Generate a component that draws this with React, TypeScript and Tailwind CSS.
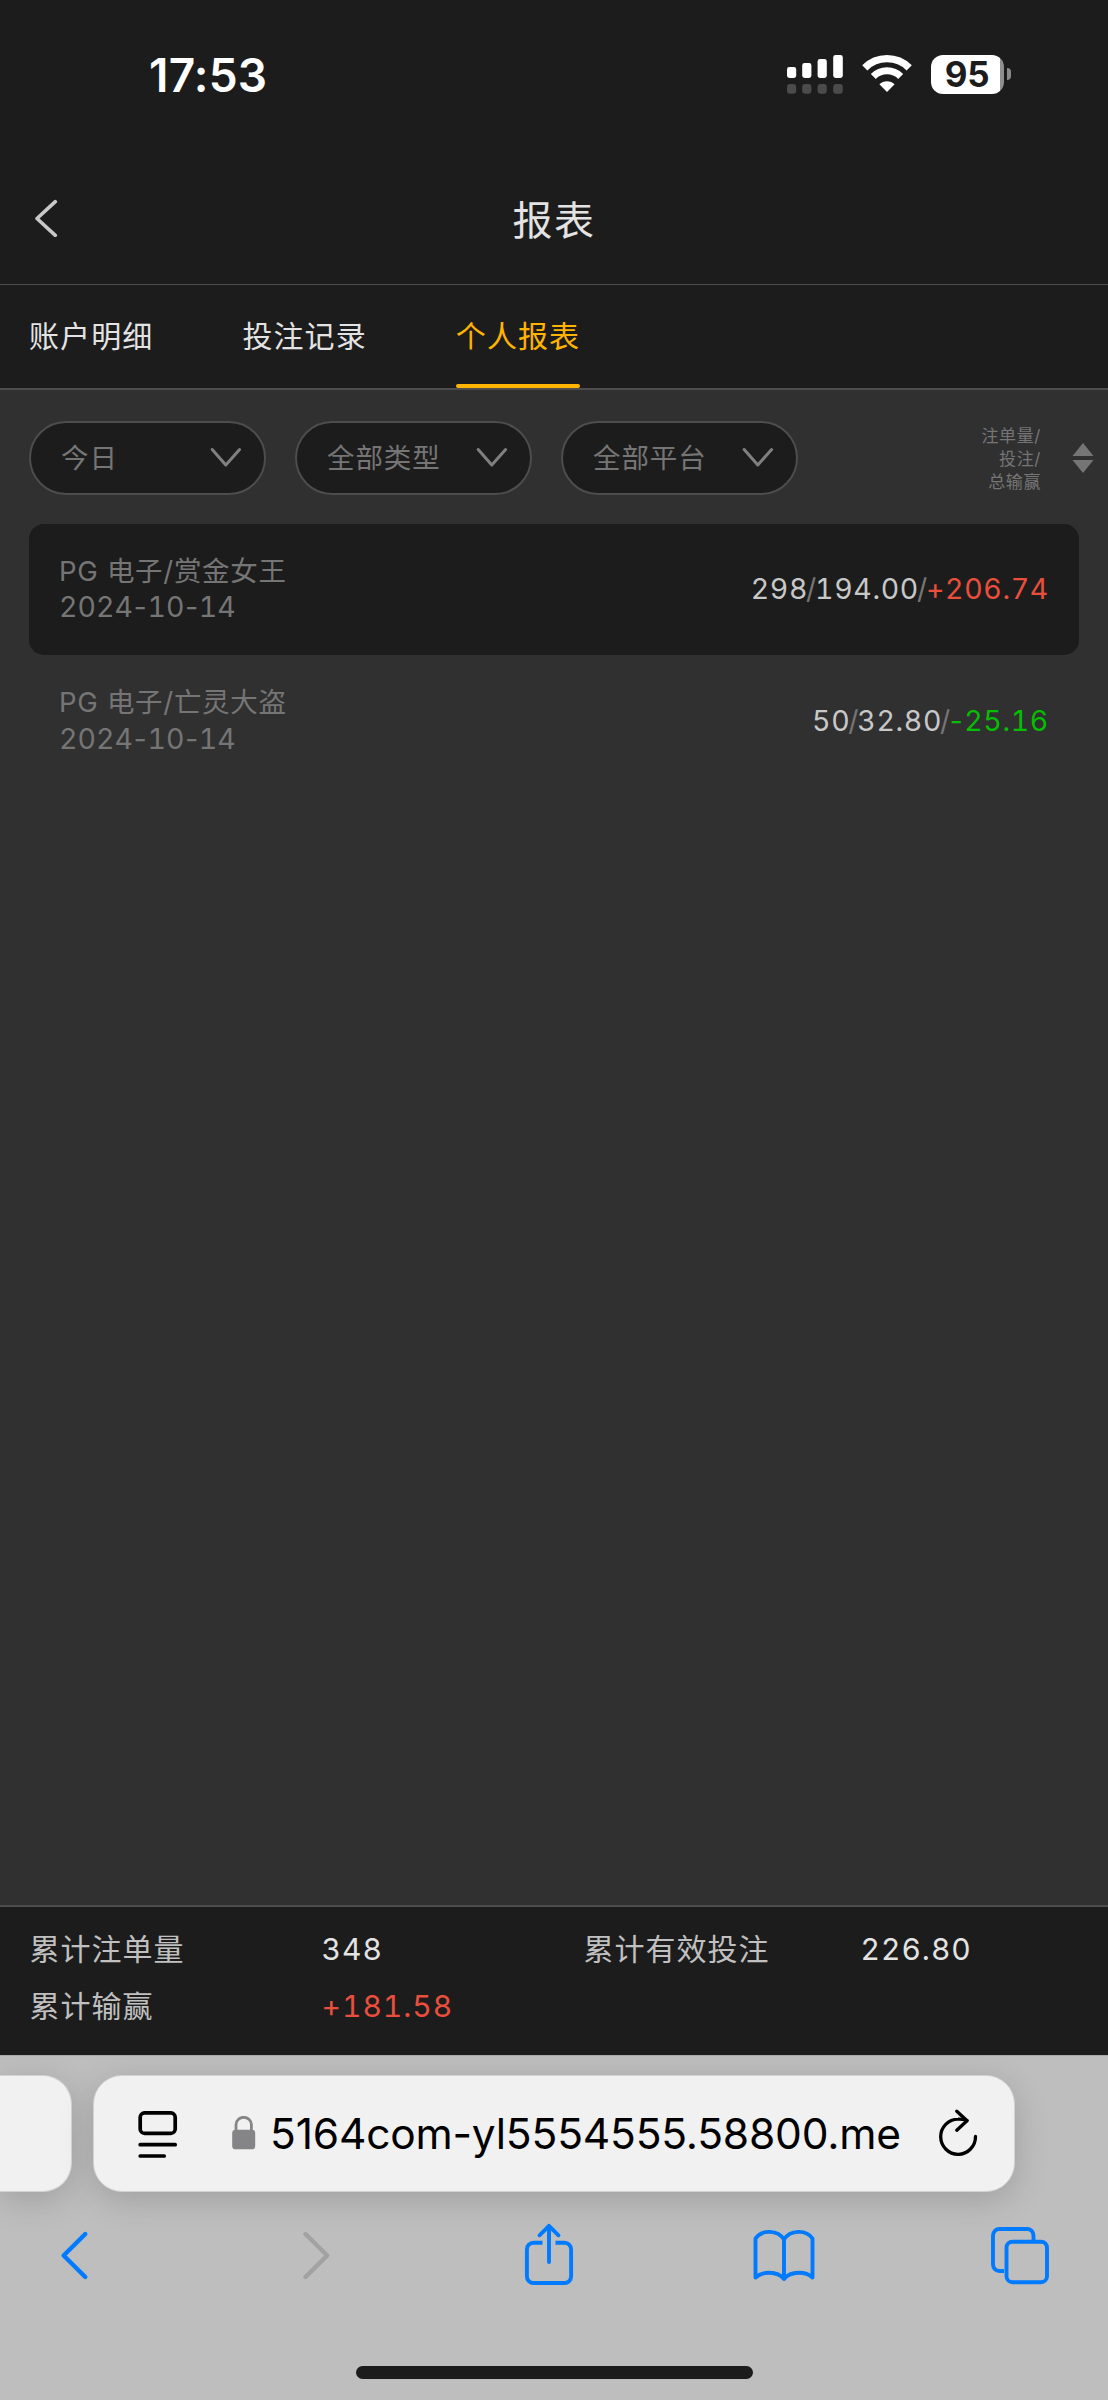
import { Fragment, type ReactNode } from "react";

const tabs = ["账户明细", "投注记录", "个人报表"];
const filters = ["今日", "全部类型", "全部平台"];

const rows = [
  { name: "PG 电子/赏金女王", date: "2024-10-14", count: "298", bet: "194.00", result: "+206.74", win: true },
  { name: "PG 电子/亡灵大盗", date: "2024-10-14", count: "50", bet: "32.80", result: "-25.16", win: false },
];

function StatusBar() {
  return (
    <div className="flex h-[150px] items-start pl-[149px] pt-[54px] text-white">
      <span className="-mt-[1px] mb-[1px] w-[638px] text-[46px] font-semibold leading-[44px] tracking-[0.2px]">17:53</span>
      <svg width="56" height="40" viewBox="0 0 56 40" className="shrink-0" fill="#fff">
        <rect x="0" y="13" width="9.2" height="11" rx="2.4" />
        <rect x="15.2" y="9" width="9.2" height="15" rx="2.4" />
        <rect x="30.6" y="5" width="9.2" height="19" rx="2.4" />
        <rect x="46.2" y="1" width="9.6" height="23" rx="2.4" />
        <g fill="#4b4b4b">
          <rect x="0" y="30" width="9.2" height="9.8" rx="3" />
          <rect x="15.2" y="30" width="9.2" height="9.8" rx="3" />
          <rect x="30.6" y="30" width="9.2" height="9.8" rx="3" />
          <rect x="46.2" y="30" width="9.6" height="9.8" rx="3" />
        </g>
      </svg>
      <svg width="50" height="40" viewBox="0 0 50 40" className="ml-[19px] shrink-0" fill="none" stroke="#fff">
        <path d="M2.8 13.8A31.5 31.5 0 0 1 47.2 13.8" strokeWidth="7.4" />
        <path d="M11.3 22.4A19.4 19.4 0 0 1 38.7 22.4" strokeWidth="7" />
        <path d="M25 38L17.4 30.3A10.8 10.8 0 0 1 32.6 30.3Z" fill="#fff" stroke="none" />
      </svg>
      <div className="ml-[19px] flex items-center">
        <div className="mt-[1px] flex h-[39px] w-[73px] items-center rounded-[12px] bg-gradient-to-r from-white from-[95%] to-[#8f8f8f] to-[95%]">
          <span className="w-[72px] text-center text-[35px] font-bold leading-[39px] tracking-[-0.2px] text-[#1c1c1c]">95</span>
        </div>
        <div className="ml-[3px] h-[12px] w-[4px] rounded-r-full bg-[#8b8b8b]" />
      </div>
    </div>
  );
}

function Header() {
  return (
    <div className="flex h-[135px] items-center border-b border-[#4d4d4d] px-[33px]">
      <svg width="26" height="40" viewBox="0 0 26 40" fill="none" stroke="#c8c8c8" strokeWidth="3.6" strokeLinecap="round" strokeLinejoin="round">
        <path d="M22.3 4.7L4 21.5L22.3 38.3" />
      </svg>
      <h1 className="mr-[26px] flex-1 pt-[8px] text-center text-[40px] font-normal leading-[50px] tracking-[1.4px] text-[#e3e3e3]">报表</h1>
    </div>
  );
}

function Tabs() {
  return (
    <div className="flex h-[105px] gap-[89px] border-b-2 border-[#4d4d4d] pl-[29px]">
      {tabs.map((tab, i) => (
        <div
          key={tab}
          className={
            i === 2
              ? "relative h-full text-[30px] leading-[102px] tracking-[1.1px] text-[#ffb400]"
              : "relative h-full text-[30px] leading-[102px] tracking-[1.1px] text-[#e3e3e3]"
          }
        >
          {tab}
          {i === 2 && <span className="absolute bottom-0 left-0 h-[4px] w-full rounded-full bg-[#ffb400]" />}
        </div>
      ))}
    </div>
  );
}

function Filters() {
  return (
    <div className="flex h-[74px] items-center gap-[29px]">
      {filters.map((label) => (
        <button
          key={label}
          className="flex h-[74px] w-[237px] items-center justify-between rounded-full border-[2.5px] border-[#4d4d4d] bg-[#1c1c1c] pl-[30px] pr-[21px] text-[27.5px] tracking-[0.9px] text-[#757575]"
        >
          <span className="leading-[70px]">{label}</span>
          <svg width="34" height="24" viewBox="0 0 34 24" fill="none" stroke="#808080" strokeWidth="3" strokeLinecap="round" strokeLinejoin="round">
            <path d="M3.2 3.5L16.8 19L30.6 3.5" />
          </svg>
        </button>
      ))}
      <div className="ml-auto flex items-center">
        <div className="pt-[4px] text-right text-[17px] leading-[23px] tracking-[0.6px] text-[#757575]">
          <div>注单量/</div>
          <div>投注/</div>
          <div>总输赢</div>
        </div>
        <svg width="22" height="30" viewBox="0 0 22 30" className="ml-[31px]" fill="#757575">
          <path d="M0.5 13L11 0L21.5 13Z" />
          <path d="M0.5 17L11 30L21.5 17Z" />
        </svg>
      </div>
    </div>
  );
}

/* Tabular figures with the hyphens and slashes drawn slightly tighter than a digit cell. */
function Tight({ children }: { children: string }) {
  return <span className="-mx-[2px]">{children}</span>;
}

function Figures({ value }: { value: string }) {
  return (
    <>
      {value.split("-").map((part, i) => (
        <Fragment key={i}>
          {i > 0 && <Tight>-</Tight>}
          {part}
        </Fragment>
      ))}
    </>
  );
}

function ReportRow({ row, filled }: { row: (typeof rows)[number]; filled: boolean }) {
  return (
    <div
      className={
        filled
          ? "flex h-[131.5px] items-center justify-between rounded-[15px] bg-[#1c1c1c] px-[30px]"
          : "flex h-[131.5px] items-center justify-between rounded-[15px] px-[30px]"
      }
    >
      <div className="text-[27.5px] leading-[35.5px] tracking-[0.7px] text-[#757575]">
        <div>{row.name}</div>
        <div className="text-[28.5px] tracking-[0px] tabular-nums">
          <Figures value={row.date} />
        </div>
      </div>
      <div className="text-[28.5px] leading-[36px] tracking-[0.65px] text-[#757575] tabular-nums">
        <span className="text-[#c8c8c8]">{row.count}</span>
        <Tight>/</Tight>
        <span className="text-[#c8c8c8]">{row.bet}</span>
        <Tight>/</Tight>
        <span className={row.win ? "text-[#ea4e3d]" : "text-[#04be02]"}>
          <Figures value={row.result} />
        </span>
      </div>
    </div>
  );
}

function Totals() {
  return (
    <div className="grid h-[150px] grid-cols-[292px_262px_277px_1fr] grid-rows-[57px_57px] border-t-2 border-[#4d4d4d] bg-[#1c1c1c] pl-[29.5px] pt-[14px] text-[30px] leading-[57px] tracking-[1px] text-[#c0c0c0] tabular-nums">
      <span>累计注单量</span>
      <span className="text-[#e3e3e3]">348</span>
      <span>累计有效投注</span>
      <span className="text-[#e3e3e3]">226.80</span>
      <span>累计输赢</span>
      <span className="text-[#ea4e3d]">+181.58</span>
    </div>
  );
}

function ToolIcon({ width, children, className = "", color = "#007aff" }: { width: number; children: ReactNode; className?: string; color?: string }) {
  return (
    <svg width={width} height="70" viewBox={`0 0 ${width} 70`} className={className} fill="none" stroke={color} strokeWidth="3.9" strokeLinecap="round" strokeLinejoin="round">
      {children}
    </svg>
  );
}

function BrowserBar() {
  return (
    <div className="flex h-[345px] flex-col overflow-hidden border-t border-[#a9a9a9] bg-[#bebebe]">
      <div className="mt-[19px] flex h-[117px] gap-[21px]">
        <div className="h-full w-[72px] rounded-r-[29px] border border-l-0 border-[#d2d2d2] bg-[#f1f1f1] shadow-[0_8px_34px_rgba(0,0,0,0.16)]" />
        <div className="flex h-full w-[922px] items-center rounded-[29px] border border-[#d2d2d2] bg-[#f1f1f1] pl-[44px] shadow-[0_8px_34px_rgba(0,0,0,0.16)]">
          <svg width="40" height="48" viewBox="0 0 40 48" fill="none" stroke="#000" strokeWidth="3.7" strokeLinecap="round">
            <rect x="2.2" y="2.9" width="35" height="20.4" rx="4.4" />
            <path d="M2.2 34.7H37.2M2.2 46H26.2" />
          </svg>
          <svg width="24" height="34" viewBox="0 0 24 34" className="-mt-[2px] ml-[54px]" fill="#858587">
            <rect x="0.2" y="13.7" width="23" height="19.6" rx="3.4" />
            <path d="M4 15V8.5A7.7 7.2 0 0 1 19.4 8.5V15" fill="none" stroke="#858587" strokeWidth="2.8" />
          </svg>
          <span className="ml-[14px] w-[647px] whitespace-nowrap text-[42.5px] leading-[60px] tracking-[-0.2px] text-black">5164com-yl5554555.58800.me</span>
          <svg width="44" height="50" viewBox="0 0 44 50" className="ml-[18.5px]" fill="none" stroke="#000" strokeWidth="3.3" strokeLinecap="round" strokeLinejoin="round">
            <path d="M31 11.5C28 10.3 25 10 22 10.1A17.4 17.6 0 1 0 39.5 27.5" />
            <path d="M20.8 2.2L31 11.7L20.8 21.2" />
          </svg>
        </div>
      </div>
      <div className="mt-[28px] flex h-[70px] items-center pl-[59px]">
        <ToolIcon width={31}>
          <path d="M26.3 14L4.6 35.5L26.3 57" strokeWidth="4.4" />
        </ToolIcon>
        <ToolIcon width={31} className="ml-[211px]" color="#a2a2a2">
          <path d="M4.5 14L26.2 35.5L4.5 57" strokeWidth="4.4" />
        </ToolIcon>
        <ToolIcon width={52} className="ml-[191px]">
          <path d="M19.5 22.8H10.5A6.6 6.6 0 0 0 3.9 29.4V56.4A6.6 6.6 0 0 0 10.5 63H41.5A6.6 6.6 0 0 0 48.1 56.4V29.4A6.6 6.6 0 0 0 41.5 22.8H32.5" strokeLinecap="butt" />
          <path d="M26 42V6.5M16.5 15.3L26 5.8L35.5 15.3" />
        </ToolIcon>
        <ToolIcon width={64} className="ml-[177px]">
          <path d="M32 19.5C26 10 10 9 3.5 18.5V57.5C10 51.5 25 50.5 32 59C39 50.5 54 51.5 60.5 57.5V18.5C54 9 38 10 32 19.5V59" />
        </ToolIcon>
        <ToolIcon width={60} className="ml-[174px]">
          <path d="M14 51H9.5A6.4 6.4 0 0 1 3 44.5V15.4A6.4 6.4 0 0 1 9.4 9H37.1A6.4 6.4 0 0 1 43.5 15.4V20" strokeLinecap="butt" />
          <rect x="16.5" y="21.7" width="40.5" height="40.5" rx="6" />
        </ToolIcon>
      </div>
      <div className="mx-auto mt-[76px] h-[13px] w-[397px] rounded-full bg-[#1c1c1c]" />
    </div>
  );
}

export default function App() {
  return (
    <div className="flex h-[2400px] w-[1108px] flex-col overflow-hidden bg-[#303030] font-['Inter','Noto_Sans_CJK_SC',sans-serif]">
      <div className="bg-[#1c1c1c]">
        <StatusBar />
        <Header />
        <Tabs />
      </div>
      <main className="flex-1 pt-[30.5px]">
        <div className="pl-[29px] pr-[14px]">
          <Filters />
        </div>
        <div className="mt-[29px] px-[29px]">
          {rows.map((row, i) => (
            <ReportRow key={row.name} row={row} filled={i % 2 === 0} />
          ))}
        </div>
      </main>
      <Totals />
      <BrowserBar />
    </div>
  );
}
